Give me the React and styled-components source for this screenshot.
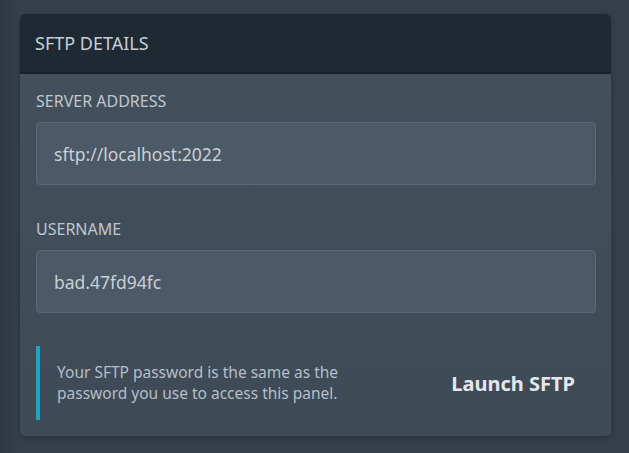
import React from 'react';
import styled, { createGlobalStyle } from 'styled-components';

const Global = createGlobalStyle`
    html, body { margin:0; padding:0; }
    body{
        background:#333e4a;
        font-family:"Noto Sans", "Open Sans", sans-serif;
        width:629px;
        height:453px;
        overflow:hidden;
    }
`

const Page = styled.div`
    padding:14px 18px 0 20px;
    height:453px;
    box-sizing:border-box;
    background:linear-gradient(90deg, #2e3843 0px, #343f4b 18px, #343f4b 100%);
`

const Card = styled.section`
    width:591px;
    height:422px;
    border-radius:5px;
    overflow:hidden;
    background:linear-gradient(180deg, #44515d 0%, #3e4a56 100%);
    box-shadow:0 2px 6px rgba(0,0,0,.2);
    display:flex;
    flex-direction:column;
`

const Header = styled.header`
    height:58px;
    background:#1f2933;
    border-bottom:2px solid #18202a;
    display:flex;
    align-items:center;
    padding:0 15px;
    color:#c7ced5;
    font-size:18px;
`

const Body = styled.div`
    padding:17px 16px 0 16px;
    display:flex;
    flex-direction:column;
`

const Field = styled.div`
    display:flex;
    flex-direction:column;
    margin-bottom:${p => p.gap}px;
`

const Label = styled.label`
    font-size:16px;
    line-height:20px;
    color:#bfc7cf;
    margin-bottom:11px;
`

const Input = styled.input`
    box-sizing:border-box;
    width:560px;
    height:63px;
    background:#4c5966;
    border:1px solid #5b6773;
    border-radius:4px;
    padding:0 17px;
    color:#c9d0d7;
    font-family:inherit;
    font-size:17.5px;
    outline:none;
`

const Footer = styled.div`
    display:flex;
    align-items:center;
    justify-content:space-between;
    margin-top:33px;
`

const Note = styled.div`
    border-left:4px solid #1ba6c6;
    height:74px;
    display:flex;
    align-items:center;
    padding-left:17px;
    color:#b5bec7;
    font-size:15.5px;
    line-height:21px;
`

const LaunchButton = styled.button`
    background:none;
    border:none;
    color:#e4e8ec;
    font-family:inherit;
    font-weight:700;
    font-size:20px;
    padding:0;
    margin-right:20px;
    cursor:pointer;
`

const App = () => {
    return (
        <Page>
            <Global/>
            <Card>
                <Header>SFTP DETAILS</Header>
                <Body>
                    <Field gap={34}>
                        <Label>SERVER ADDRESS</Label>
                        <Input readOnly value="sftp://localhost:2022"/>
                    </Field>
                    <Field gap={0}>
                        <Label>USERNAME</Label>
                        <Input readOnly value="bad.47fd94fc"/>
                    </Field>
                    <Footer>
                        <Note>
                            Your SFTP password is the same as the<br/>
                            password you use to access this panel.
                        </Note>
                        <LaunchButton>Launch SFTP</LaunchButton>
                    </Footer>
                </Body>
            </Card>
        </Page>
    );
}

export default App;
